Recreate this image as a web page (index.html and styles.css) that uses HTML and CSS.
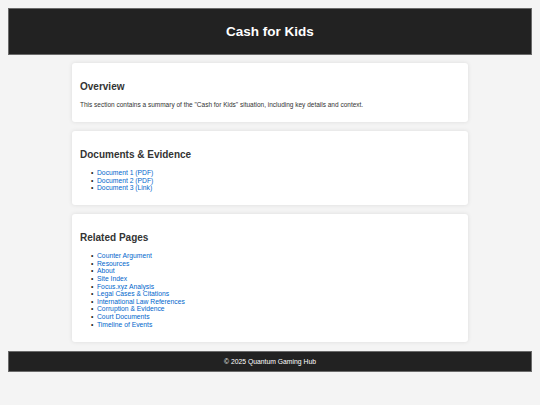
FILE: index.html
```html
<!DOCTYPE html>
<html lang="en">
<head>
<meta charset="utf-8">
<title>Cash for Kids</title>
<link rel="stylesheet" href="styles.css">
</head>
<body>
<header class="site-header">
  <h1 class="site-title">Cash for Kids</h1>
</header>
<main class="content">
  <section class="card">
    <h2 class="card-title">Overview</h2>
    <p class="card-text">This section contains a summary of the "Cash for Kids" situation, including key details and context.</p>
  </section>
  <section class="card">
    <h2 class="card-title">Documents &amp; Evidence</h2>
    <ul class="link-list">
      <li><a href="#">Document 1 (PDF)</a></li>
      <li><a href="#">Document 2 (PDF)</a></li>
      <li><a href="#">Document 3 (Link)</a></li>
    </ul>
  </section>
  <section class="card">
    <h2 class="card-title">Related Pages</h2>
    <ul class="link-list">
      <li><a href="#">Counter Argument</a></li>
      <li><a href="#">Resources</a></li>
      <li><a href="#">About</a></li>
      <li><a href="#">Site Index</a></li>
      <li><a href="#">Focus.xyz Analysis</a></li>
      <li><a href="#">Legal Cases &amp; Citations</a></li>
      <li><a href="#">International Law References</a></li>
      <li><a href="#">Corruption &amp; Evidence</a></li>
      <li><a href="#">Court Documents</a></li>
      <li><a href="#">Timeline of Events</a></li>
    </ul>
  </section>
</main>
<footer class="site-footer">
  <p class="footer-text">&copy; 2025 Quantum Gaming Hub</p>
</footer>
</body>
</html>
```

FILE: styles.css
```css
html, body {
  background: #f4f4f4;
}
body {
  margin: 8px;
  font-family: "Liberation Sans", Arial, sans-serif;
  color: #333;
}
.site-header {
  background: #222;
  border: 1px solid #6a6a6a;
  height: 45px;
  display: flex;
  align-items: center;
  justify-content: center;
}
.site-title {
  margin: 0;
  color: #fff;
  font-size: 13.5px;
  font-weight: bold;
}
.content {
  display: flex;
  flex-direction: column;
  align-items: center;
  gap: 9px;
  padding: 8px 0 9px;
}
.card {
  box-sizing: border-box;
  width: 396px;
  background: #fff;
  border-radius: 3px;
  box-shadow: 0 0 4px rgba(0, 0, 0, 0.1);
  padding: 9px 8px;
}
.card-title {
  font-size: 10px;
  font-weight: bold;
  color: #333;
  margin: 8.5px 0 5px;
}
.card-text {
  font-size: 6.5px;
  line-height: 7.5px;
  color: #333;
  margin: 9px 0 5px;
}
.link-list {
  font-size: 6.75px;
  line-height: 7.6px;
  margin: 9.5px 0 4.5px;
  padding-left: 17px;
  list-style: none;
  color: #333;
}
.link-list li {
  line-height: 7.6px;
}
.link-list li::before {
  content: "\2022";
  display: inline-block;
  width: 6px;
  margin-left: -6px;
  color: #222;
}
.link-list a {
  color: #0066cc;
  text-decoration: none;
}
.site-footer {
  background: #222;
  border: 1px solid #6a6a6a;
  height: 19px;
  display: flex;
  align-items: center;
  justify-content: center;
}
.footer-text {
  margin: 0;
  color: #fff;
  font-size: 6.8px;
}
```
